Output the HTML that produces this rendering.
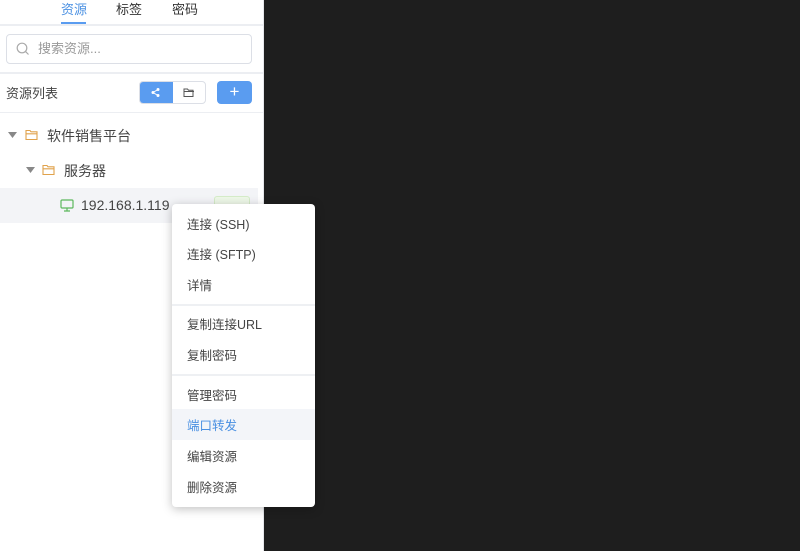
<!DOCTYPE html>
<html><head><meta charset="utf-8"><style>
*{box-sizing:border-box;margin:0;padding:0}
body{width:800px;height:551px;overflow:hidden;background:#1e1e1e;font-family:"Liberation Sans","Noto Sans CJK SC",sans-serif;position:relative}
.side{position:absolute;left:0;top:0;width:264px;height:551px;background:#fff;border-right:1px solid #e5e7eb}
.abs{position:absolute}
.t{font-size:13px;color:#333;white-space:nowrap}
.menu{position:absolute;left:172px;top:204px;width:143px;height:303px;background:#fff;border-radius:4px;box-shadow:0 2px 10px rgba(0,0,0,.25)}
.mi{position:absolute;left:15px;font-size:12.5px;color:#444;white-space:nowrap}
.div{position:absolute;left:0;width:143px;height:2px;background:#eef0f3}
</style></head><body>
<div class="side">
  <div class="abs t" style="left:61px;top:-1px;color:#4a90e2">资源</div>
  <div class="abs" style="left:61px;top:22px;width:25px;height:2px;background:#5a9cf0"></div>
  <div class="abs t" style="left:116px;top:-1px">标签</div>
  <div class="abs t" style="left:172px;top:-1px">密码</div>
  <div class="abs" style="left:0;top:24px;width:263px;height:2px;background:#eceef2"></div>
  <div class="abs" style="left:6px;top:34px;width:246px;height:30px;border:1px solid #dcdfe6;border-radius:4px"></div>
  <svg class="abs" style="left:16px;top:42px" width="14" height="14" viewBox="0 0 14 14"><circle cx="6" cy="6" r="4.8" fill="none" stroke="#aaa" stroke-width="1.2"/><line x1="9.6" y1="9.6" x2="12.5" y2="12.5" stroke="#aaa" stroke-width="1.2"/></svg>
  <div class="abs t" style="left:38px;top:38px;color:#999">搜索资源...</div>
  <div class="abs" style="left:0;top:72px;width:263px;height:2px;background:#eceef2"></div>
  <div class="abs t" style="left:6px;top:83px;color:#444">资源列表</div>
  <div class="abs" style="left:139px;top:81px;width:67px;height:23px;border:1px solid #dcdfe6;border-radius:4px;overflow:hidden">
    <div class="abs" style="left:0;top:0;width:33px;height:23px;background:#5a9cf0"></div>
  </div>
  <svg class="abs" style="left:150px;top:87px" width="11" height="11" viewBox="0 0 11 11"><circle cx="8" cy="2.5" r="1.5" fill="#fff"/><circle cx="8" cy="8.5" r="1.5" fill="#fff"/><circle cx="3" cy="5.5" r="1.5" fill="#fff"/><path d="M8 2.5L3 5.5L8 8.5" stroke="#fff" fill="none"/></svg>
  <svg class="abs" style="left:183px;top:87px" width="12" height="11" viewBox="0 0 12 11"><path d="M1 2h3.5l1 1.2H10v6.3H1z M1 4.5h10" fill="none" stroke="#555"/></svg>
  <div class="abs" style="left:217px;top:81px;width:35px;height:23px;background:#5a9cf0;border-radius:4px;color:#fff;text-align:center;font-size:17px;line-height:22px">+</div>
  <div class="abs" style="left:0;top:112px;width:263px;height:1px;background:#eceef2"></div>
  <svg class="abs" style="left:8px;top:132px" width="9" height="7"><path d="M0 0h9L4.5 6z" fill="#888"/></svg>
  <svg class="abs" style="left:25px;top:129px" width="14" height="12" viewBox="0 0 14 12"><path d="M1 1.5h4l1 1.3h6v7.7H1z M1 4.8h11.5" fill="none" stroke="#e0a24c" stroke-width="1.1"/></svg>
  <div class="abs" style="left:47px;top:126px;font-size:14px;color:#444">软件销售平台</div>
  <svg class="abs" style="left:26px;top:167px" width="9" height="7"><path d="M0 0h9L4.5 6z" fill="#888"/></svg>
  <svg class="abs" style="left:42px;top:164px" width="14" height="12" viewBox="0 0 14 12"><path d="M1 1.5h4l1 1.3h6v7.7H1z M1 4.8h11.5" fill="none" stroke="#e0a24c" stroke-width="1.1"/></svg>
  <div class="abs" style="left:64px;top:161px;font-size:14px;color:#444">服务器</div>
  <div class="abs" style="left:0;top:188px;width:258px;height:35px;background:#f3f4f7"></div>
  <svg class="abs" style="left:60px;top:199px" width="14" height="13" viewBox="0 0 14 13"><rect x="1" y="1" width="12" height="8" rx="1" fill="none" stroke="#5cb85c" stroke-width="1.2"/><path d="M7 9v3M4 12h6" stroke="#5cb85c" stroke-width="1.2"/></svg>
  <div class="abs" style="left:81px;top:197px;font-size:14px;color:#444">192.168.1.119</div>
  <div class="abs" style="left:214px;top:196px;width:36px;height:16px;background:#eef8e8;border:1px solid #d5ecc8;border-radius:3px"></div>
</div>
<div class="menu">
  <div class="mi" style="top:10px">连接 (SSH)</div>
  <div class="mi" style="top:40px">连接 (SFTP)</div>
  <div class="mi" style="top:71px">详情</div>
  <div class="div" style="top:100px"></div>
  <div class="mi" style="top:110px">复制连接URL</div>
  <div class="mi" style="top:141px">复制密码</div>
  <div class="div" style="top:170px"></div>
  <div class="mi" style="top:181px">管理密码</div>
  <div class="abs" style="left:0;top:205px;width:143px;height:31px;background:#f3f5f9"></div>
  <div class="mi" style="top:211px;color:#4a90e2">端口转发</div>
  <div class="mi" style="top:242px">编辑资源</div>
  <div class="mi" style="top:273px">删除资源</div>
</div>
</body></html>
